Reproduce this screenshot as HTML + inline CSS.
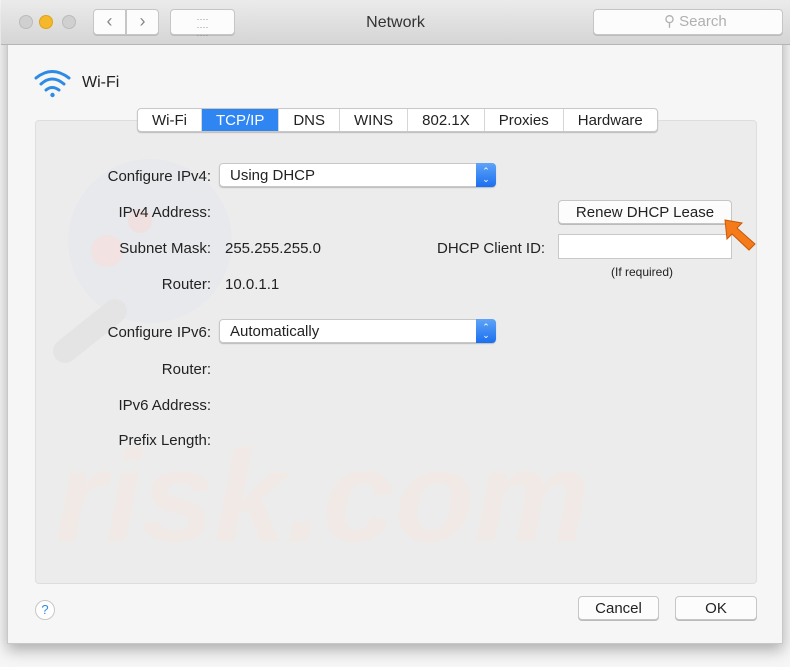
<!DOCTYPE html>
<html><head><style>
*{margin:0;padding:0;box-sizing:border-box}
body{width:790px;height:667px;background:#f6f6f6;font-family:"Liberation Sans",sans-serif;position:relative;overflow:hidden;color:#222}
.win{position:absolute;left:7px;top:0;width:776px;height:644px;background:#f6f6f6;box-shadow:0 6px 14px rgba(0,0,0,.3);border:1px solid #c8c8c8;border-top:none}
.title{position:absolute;left:-7px;top:0;width:789px;height:45px;background:linear-gradient(#ebebeb,#d5d5d5);border-bottom:1px solid #b5b5b5}
.dot{position:absolute;top:15px;width:14px;height:14px;border-radius:50%;background:#d0d0d0;border:1px solid #bbb}
.btn{position:absolute;background:#fcfcfc;border:1px solid #c6c6c6;border-radius:4px;box-shadow:0 1px 0 #bbb}
.abs{position:absolute}
.panel{position:absolute;top:120px;width:722px;height:464px;background:#ececec;border:1px solid #dedede;border-radius:4px}
.tabs{position:absolute;left:137px;top:108px;height:24px;display:flex;background:#fff;border:1px solid #c8c8c8;border-radius:4px;box-shadow:0 1px 1px #bbb;font-size:15px;overflow:hidden}
.tabs div{padding:0 14px;line-height:24px;border-right:1px solid #d6d6d6}
.tabs div:last-child{border-right:none}
.lbl{position:absolute;font-size:15px;text-align:right;width:200px;left:11px}
.sel{position:absolute;left:219px;width:277px;height:24px;background:#fff;border:1px solid #c8c8c8;border-radius:4px;box-shadow:0 1px 1px #bbb;font-size:15px;line-height:23px;padding-left:10px}
.sel .ar{position:absolute;right:-1px;top:-1px;width:20px;height:24px;background:linear-gradient(#5fa4f7,#1b6ff0);border-radius:0 4px 4px 0;color:#fff;font-size:9px;line-height:8px;text-align:center;padding-top:4px}
</style></head><body>
<div class="win">
 <div class="title">
  <div class="dot" style="left:18px"></div>
  <div class="dot" style="left:38px;background:#f5b82a;border-color:#e0a218"></div>
  <div class="dot" style="left:61px"></div>
  <div class="btn" style="left:92px;top:9px;width:33px;height:26px;border-radius:4px 0 0 4px;text-align:center;color:#888;font-size:18px;line-height:23px">&#8249;</div>
  <div class="btn" style="left:125px;top:9px;width:33px;height:26px;border-radius:0 4px 4px 0;text-align:center;color:#888;font-size:18px;line-height:23px">&#8250;</div>
  <div class="btn" style="left:169px;top:9px;width:65px;height:26px;text-align:center;color:#888;font-size:9px;line-height:8px;padding-top:5px">····<br>····<br>····</div>
  <div class="abs" style="left:0;width:789px;top:14px;text-align:center;font-size:16px;color:#333">Network</div>
  <div class="btn" style="left:592px;top:9px;width:190px;height:26px;color:#b0b0b0;font-size:15px;line-height:24px;padding-left:70px">&#9906;&nbsp;Search</div>
 </div>
</div>
<svg class="abs" style="left:33px;top:68px" width="40" height="30" viewBox="0 0 40 30"><g fill="none" stroke="#2d8be6" stroke-width="3" stroke-linecap="round"><path d="M3 10 Q19 -3 36 10"/><path d="M8 16 Q19 6 31 16"/><path d="M13 22 Q19 17 26 22"/></g><circle cx="19.5" cy="27" r="2.2" fill="#2d8be6"/></svg>
<div class="abs" style="left:82px;top:74px;font-size:16px">Wi-Fi</div>
<div class="panel" style="left:35px"></div>
<svg class="abs" style="left:35px;top:121px" width="720" height="460"><circle cx="115" cy="120" r="82" fill="#e6e8ec" opacity=".7"/><circle cx="105" cy="100" r="12" fill="#f1e0e0"/><circle cx="72" cy="130" r="16" fill="#f2e2e2"/><path d="M30 230 L80 190" stroke="#e4e4e4" stroke-width="24" stroke-linecap="round"/><text x="20" y="420" font-family="Liberation Sans" font-weight="bold" font-style="italic" font-size="130" fill="#f1e9e6">risk.com</text></svg>
<div class="tabs"><div>Wi-Fi</div><div style="background:#2f86f2;color:#fff">TCP/IP</div><div>DNS</div><div>WINS</div><div>802.1X</div><div>Proxies</div><div>Hardware</div></div>
<div class="lbl" style="top:168px">Configure IPv4:</div>
<div class="sel" style="top:163px">Using DHCP<div class="ar">&#8963;<br>&#8964;</div></div>
<div class="lbl" style="top:204px">IPv4 Address:</div>
<div class="lbl" style="top:240px">Subnet Mask:</div>
<div class="abs" style="left:225px;top:240px;font-size:15px">255.255.255.0</div>
<div class="lbl" style="top:276px">Router:</div>
<div class="abs" style="left:225px;top:276px;font-size:15px">10.0.1.1</div>
<div class="lbl" style="top:324px">Configure IPv6:</div>
<div class="sel" style="top:319px">Automatically<div class="ar">&#8963;<br>&#8964;</div></div>
<div class="lbl" style="top:361px">Router:</div>
<div class="lbl" style="top:397px">IPv6 Address:</div>
<div class="lbl" style="top:432px">Prefix Length:</div>
<div class="btn" style="left:558px;top:200px;width:174px;height:24px;text-align:center;font-size:15px;line-height:23px">Renew DHCP Lease</div>
<div class="abs" style="left:437px;top:240px;font-size:15px">DHCP Client ID:</div>
<div class="abs" style="left:558px;top:234px;width:174px;height:25px;background:#fff;border:1px solid #c8c8c8"></div>
<div class="abs" style="left:611px;top:265px;font-size:12px">(If required)</div>
<svg class="abs" style="left:722px;top:218px" width="36" height="34" viewBox="0 0 36 34"><path d="M3 2 L20 5 L15 10 L33 26 L27 32 L10 16 L5 21 Z" fill="#f47a1a" stroke="#c85a08" stroke-width="1"/></svg>
<div class="abs" style="left:35px;top:600px;width:20px;height:20px;border-radius:50%;background:#fff;border:1px solid #c8c8c8;color:#2d8be6;font-size:13px;text-align:center;line-height:18px">?</div>
<div class="btn" style="left:578px;top:596px;width:81px;height:24px;text-align:center;font-size:15px;line-height:23px">Cancel</div>
<div class="btn" style="left:675px;top:596px;width:82px;height:24px;text-align:center;font-size:15px;line-height:23px">OK</div>
</body></html>
